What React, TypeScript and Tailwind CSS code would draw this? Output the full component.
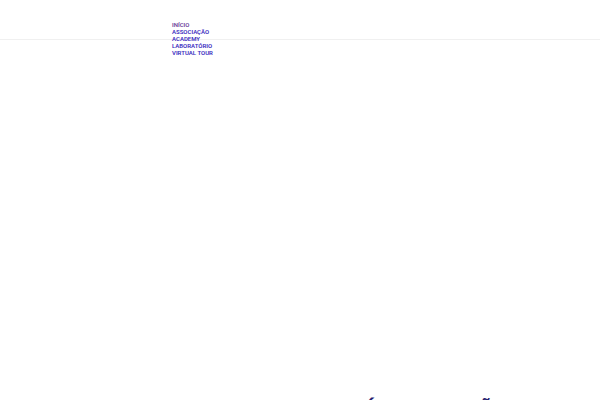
const links = ["ASSOCIAÇÃO", "ACADEMY", "LABORATÓRIO", "VIRTUAL TOUR"];

export default function App() {
  return (
    <div className="flex h-screen flex-col overflow-hidden bg-white font-['Roboto','Open_Sans',sans-serif]">
      <header className="h-10 shrink-0 border-b border-[#f0f0f0] px-[172px] pt-[21px]">
        <nav>
          <ul className="flex flex-col text-[6px] leading-[7px] font-semibold whitespace-nowrap">
            <li>
              <a href="#inicio" className="text-[#6d3f9a]">INÍCIO</a>
            </li>
            {links.map((label) => (
              <li key={label}>
                <a href={"#" + label.toLowerCase()} className="text-[#3a2cc0]">{label}</a>
              </li>
            ))}
          </ul>
        </nav>
      </header>
      <main className="flex min-h-0 flex-1 flex-col pt-[357px]">
        <h1 className="flex shrink-0 justify-end gap-[106px] pr-[107px] font-['Lato',sans-serif] text-[20px] leading-6 font-bold text-[#28206f]">
          <span>Í</span>
          <span>Ã</span>
        </h1>
      </main>
    </div>
  );
}
